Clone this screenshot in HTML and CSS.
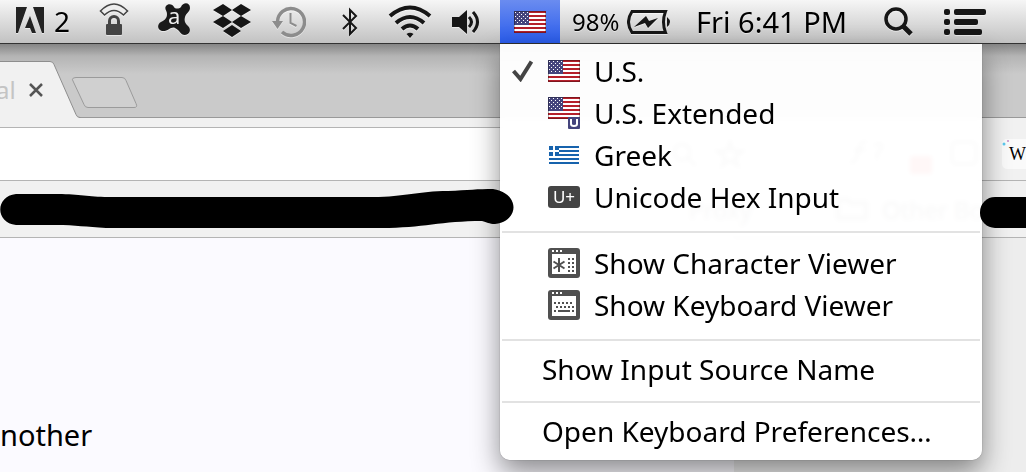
FILE: index.html
```
<!DOCTYPE html>
<html lang="en">
<head>
    <meta charset="utf-8">
    <title>Input Sources</title>
    <link rel="stylesheet" href="styles.css">
</head>
<body>
    <!-- Shared flag drawing -->
    <svg class="defs" aria-hidden="true">
        <defs>
            <pattern id="stars" width="4" height="4" patternUnits="userSpaceOnUse">
                <rect x="1" y="1" width="1" height="1" fill="#fff"/>
                <rect x="3" y="3" width="1" height="1" fill="#fff"/>
            </pattern>
            <symbol id="us-flag" viewBox="0 0 32 22">
                <rect width="32" height="22" fill="#fff"/>
                <path d="M0 1h32M0 5h32M0 9h32M0 13h32M0 17h32M0 21h32" stroke="#b5202b" stroke-width="2"/>
                <rect width="15" height="14" fill="#45457d"/>
                <rect x="1" y="1" width="13" height="12" fill="url(#stars)"/>
                <rect x=".5" y=".5" width="31" height="21" fill="none" stroke="#000" stroke-opacity=".3"/>
            </symbol>
        </defs>
    </svg>

    <header class="menubar">
        <button class="status adobe" aria-label="Adobe notifications">
            <svg width="28" height="26" viewBox="0 0 28 26"><path fill="#222" d="M0 0h11L2 26H0zM17 0h11v26h-2zM14 9l6 17h-4l-2-5h-5z"/></svg>
            <span>2</span>
        </button>
        <button class="status vpn" aria-label="VPN">
            <svg width="30" height="34" viewBox="0 0 30 34">
                <path d="M1.500 8q13.500-14 27 0l-4 4q-9.500-9-19 0z" fill="#eee" stroke="#444" stroke-width="1.600"/>
                <path d="M10.500 22v-4a4.500 4.500 0 0 1 9 0v4" fill="none" stroke="#444" stroke-width="3"/>
                <rect x="7" y="21" width="16" height="11" rx="1" fill="#444"/>
            </svg>
        </button>
        <button class="status avast" aria-label="Antivirus">
            <svg width="32" height="34" viewBox="0 0 32 34">
                <path fill="#1a1a1a" d="M8 3c2-3 7-2 8 1 1 2 5 2 7 0 2-5 9-5 9 1 0 4-4 5-5 9-1 4 0 6 3 9 4 4 1 9-3 9-5 0-5-5-10-7-4-2-7 4-13 3-5-1-5-7-1-9 4-2 6-4 6-8 0-3-3-5-1-8z"/>
                <text x="10" y="21" class="avast-letter">a</text>
            </svg>
        </button>
        <button class="status dropbox" aria-label="Dropbox">
            <svg width="38" height="33" viewBox="0 0 38 33"><path fill="#161616" d="M10 0l9 6-9 6-10-6zM28 0l10 6-10 6-9-6zM10 12l9 6-9 6-10-6zM28 12l10 6-10 6-9-6zM19 21l9 6-9 6-9-6z"/></svg>
        </button>
        <button class="status timemachine" aria-label="Time Machine">
            <svg width="34" height="32" viewBox="0 0 34 32" fill="none" stroke="#8c8c8c">
                <path d="M5.500 16A13.500 13.500 0 1 1 10 26" stroke-width="3.500"/>
                <path d="M0 15h11l-5.500 8z" fill="#8c8c8c" stroke="none"/>
                <path d="M18.500 7v10l6 3" stroke-width="2"/>
            </svg>
        </button>
        <button class="status bluetooth" aria-label="Bluetooth">
            <svg width="16" height="30" viewBox="0 0 16 30" fill="none" stroke="#161616" stroke-width="2"><path d="M1 8l13 13-6 6V3l6 6L1 22"/></svg>
        </button>
        <button class="status wifi" aria-label="Wi-Fi">
            <svg width="44" height="34" viewBox="0 0 44 34" fill="none" stroke="#161616" stroke-width="4">
                <path d="M2 11Q22-6 42 11M8 18q14-12 28 0M14 24q8-7 16 0"/>
                <path d="M18.500 29q3.500-2.500 7 0L22 33z" fill="#161616" stroke="none"/>
            </svg>
        </button>
        <button class="status volume" aria-label="Volume">
            <svg width="30" height="26" viewBox="0 0 30 26" fill="none" stroke="#161616" stroke-width="3">
                <path d="M0 8h7l8-7v24l-8-7H0z" fill="#161616" stroke="none"/>
                <path d="M17 8q5 5 0 10M21 3q9 10 0 20"/>
            </svg>
        </button>

        <div class="input-source">
            <button class="source-button" aria-label="Input source" aria-expanded="true">
                <svg width="32" height="22"><use href="#us-flag"/></svg>
            </button>
            <ul class="menu">
                <li><button class="item">
                    <svg class="check" width="21" height="22" viewBox="0 0 21 22"><path d="M1.500 11l7 8L19.500 1.500" fill="none" stroke="#444" stroke-width="4"/></svg>
                    <svg class="icon" width="32" height="22"><use href="#us-flag"/></svg>
                    U.S.
                </button></li>
                <li><button class="item">
                    <svg class="icon" width="32" height="32" viewBox="0 0 32 32">
                        <use href="#us-flag" width="32" height="22"/>
                        <rect x="20" y="20" width="12" height="12" rx="1" fill="#45457d"/>
                        <path d="M23 22v5q0 2 3 2t3-2v-5" fill="none" stroke="#fff" stroke-width="2"/>
                    </svg>
                    U.S. Extended
                </button></li>
                <li><button class="item">
                    <svg class="icon" width="32" height="20" viewBox="0 0 32 20">
                        <rect x="1" y="1" width="30" height="18" fill="#fff"/>
                        <path d="M1 2h30M1 6h30M1 10h30M1 14h30M1 18h30" stroke="#1763ad" stroke-width="2"/>
                        <rect x="1" y="1" width="10" height="10" fill="#1763ad"/>
                        <path d="M6 1v10M1 6h10" stroke="#fff" stroke-width="2"/>
                    </svg>
                    Greek
                </button></li>
                <li><button class="item">
                    <span class="icon unicode">U+</span>
                    Unicode Hex Input
                </button></li>
                <li class="separator"></li>
                <li><button class="item">
                    <svg class="icon" width="32" height="30" viewBox="0 0 32 30">
                        <rect width="32" height="30" rx="3" fill="#505050"/>
                        <path d="M4 3h2M8 3h2M12 3h2" stroke="#fff" stroke-width="2"/>
                        <rect x="4" y="6" width="24" height="20" fill="#fff"/>
                        <path d="M11 10v14M5.500 13.500l11 7M5.500 20.500l11-7" stroke="#505050" stroke-width="2"/>
                        <path d="M21 10v14M25 10v14" stroke="#505050" stroke-width="2" stroke-dasharray="2 2"/>
                    </svg>
                    Show Character Viewer
                </button></li>
                <li><button class="item">
                    <svg class="icon" width="32" height="30" viewBox="0 0 32 30">
                        <rect width="32" height="30" rx="3" fill="#505050"/>
                        <path d="M4 3h2M8 3h2M12 3h2" stroke="#fff" stroke-width="2"/>
                        <rect x="4" y="6" width="24" height="20" fill="#fff"/>
                        <path d="M6 13h20M8 17h18" stroke="#505050" stroke-width="2" stroke-dasharray="2 2"/>
                        <path d="M6 21h2M10 21h12M24 21h2" stroke="#505050" stroke-width="2"/>
                    </svg>
                    Show Keyboard Viewer
                </button></li>
                <li class="separator"></li>
                <li><button class="item plain">Show Input Source Name</button></li>
                <li class="separator"></li>
                <li><button class="item plain">Open Keyboard Preferences…</button></li>
            </ul>
        </div>

        <button class="status battery" aria-label="Battery 98%">
            <span>98%</span>
            <svg width="44" height="26" viewBox="0 0 44 26">
                <path d="M5 2.500h33.500q-4 10.500 0 21H5q-7-10.500 0-21z" fill="none" stroke="#161616" stroke-width="3"/>
                <path d="M40 8q6 5 0 10z" fill="#161616"/>
                <path d="M7 18l12-11 3 5 9-3-10 10-3-5z" fill="#161616"/>
            </svg>
        </button>
        <button class="status clock">Fri 6:41 PM</button>
        <button class="status search" aria-label="Spotlight">
            <svg width="30" height="30" viewBox="0 0 30 30" fill="none" stroke="#161616"><circle cx="12" cy="12" r="10" stroke-width="3.500"/><path d="M19 19l8 8" stroke-width="5"/></svg>
        </button>
        <button class="status list" aria-label="Notification Center">
            <svg width="42" height="26" viewBox="0 0 42 26" fill="#161616">
                <rect width="6" height="6" rx="2"/><rect x="10" width="32" height="6" rx="2"/>
                <rect y="10" width="6" height="6" rx="2"/><rect x="10" y="10" width="24" height="6" rx="2"/>
                <rect y="20" width="6" height="6" rx="2"/><rect x="10" y="20" width="28" height="6" rx="2"/>
            </svg>
        </button>
    </header>

    <main class="browser">
        <div class="tabstrip">
            <svg class="tab-shape" width="140" height="57" viewBox="0 0 140 57">
                <path d="M-2 .5h52q3 0 4 3l22 50q1 3 4 3V58H-2z" fill="#f1f1f1" stroke="#8e8e8e"/>
                <path d="M76 16.500h46q3 0 4 3l10 23q2 4-2 4H88q-3 0-4-3L73 20q-2-3 3-3.500z" fill="#d0d0d0" stroke="#9b9b9b"/>
            </svg>
            <div class="tab">
                <span class="tab-title">al</span>
                <button class="close" aria-label="Close tab">
                    <svg width="16" height="16" viewBox="0 0 16 16"><path d="M2 2l12 12M14 2L2 14" stroke="#555" stroke-width="2.500"/></svg>
                </button>
            </div>
        </div>
        <div class="toolbar">
            <div class="omnibox">
                <svg width="310" height="40" viewBox="0 0 310 40" fill="none" stroke="#888" stroke-width="3">
                    <circle cx="12" cy="18" r="8"/><path d="M18 24l8 8"/>
                    <path d="M60 8l3 9h10l-8 6 3 9-8-6-8 6 3-9-8-6h10z"/>
                    <path d="M180 28q6 2 8-10t9-10M184 16h12M204 12q8-6 8 2l-5 6v6"/>
                    <rect x="240" y="22" width="22" height="20" fill="#f33" stroke="none"/>
                    <rect x="282" y="8" width="24" height="22" rx="4"/>
                </svg>
            </div>
            <button class="extension" aria-label="Extension">
                <svg width="7" height="8" viewBox="0 0 7 8"><circle cx="2" cy="5" r="1.500" fill="#5bc8ee"/><circle cx="6" cy="2" r="1" fill="#c58ac8"/></svg>
                <span>W</span>
            </button>
        </div>
        <div class="bookmarks">
            <span>Proxy</span>
            <svg width="32" height="22" viewBox="0 0 32 22"><path d="M2 2h10l3 3h15v15H2z" fill="none" stroke="#777" stroke-width="3"/></svg>
            <span>Other Bo</span>
        </div>
        <div class="page">
            <p class="text">nother</p>
            <div class="side"></div>
        </div>
    </main>

    <!-- Redaction strokes -->
    <svg class="redact left" width="514" height="40" viewBox="0 0 514 40"><path d="M16 4h42c22 0 30 3 50 3h265c32 0 45-6 75-6 20-1 30-2 45-2 27 4 27 32 2 35-6 0-8-2-13-3-40 0-60 7-100 7H106c-20-1-30-3-50-3H16c-21-2-21-29 0-31z"/></svg>
    <svg class="redact right" width="46" height="32" viewBox="0 0 46 32"><rect width="70" height="31" rx="15"/></svg>
</body>
</html>
```
FILE: styles.css
```
* {
    box-sizing: border-box;
}

body {
    margin: 0;
    height: 100vh;
    display: flex;
    flex-direction: column;
    overflow: hidden;
    position: relative;
    font-family: "Noto Sans", "Open Sans", sans-serif;
    font-size: 28px;
    color: #000;
}

button {
    font: inherit;
    color: inherit;
    background: none;
    border: none;
    padding: 0;
    text-align: left;
}

svg {
    display: block;
    flex: none;
}

.defs {
    position: absolute;
    width: 0;
    height: 0;
}

/* Menu bar */
.menubar {
    display: flex;
    align-items: center;
    justify-content: flex-end;
    height: 44px;
    flex: none;
    padding-right: 40px;
    background: linear-gradient(#f6f6f6, #c2c2c2);
    border-bottom: 1px solid #333;
    position: relative;
    z-index: 2;
}

.status {
    display: flex;
    align-items: center;
    flex: none;
    line-height: 43px;
    white-space: nowrap;
    filter: drop-shadow(0 1px 0 rgba(255, 255, 255, 0.5));
}

.adobe {
    width: 83px;
    gap: 10px;
}

.adobe svg {
    margin-bottom: 4px;
}

.vpn {
    width: 59px;
}

.avast {
    width: 55px;
}

.avast-letter {
    font-size: 22px;
    fill: #eee;
}

.dropbox {
    width: 59px;
}

.vpn svg,
.avast svg,
.dropbox svg {
    margin-bottom: 3px;
}

.timemachine {
    width: 70px;
}

.bluetooth {
    width: 46px;
}

.wifi {
    width: 64px;
}

.volume {
    width: 48px;
}

.battery {
    width: 124px;
    padding-left: 12px;
    gap: 8px;
    font-size: 24px;
}

.battery,
.clock {
    margin-right: 12px;
}

.clock {
    width: 176px;
    font-size: 29px;
}

.search {
    width: 60px;
}

/* Input source menu */
.input-source {
    position: relative;
    flex: none;
}

.source-button {
    display: flex;
    align-items: center;
    justify-content: center;
    width: 60px;
    height: 43px;
    background: linear-gradient(#6a8cf0, #2a5cec);
}

.menu {
    position: absolute;
    top: 44px;
    left: 0;
    width: 482px;
    margin: 0;
    padding: 6px 0 10px;
    list-style: none;
    background: rgba(255, 255, 255, 0.96);
    backdrop-filter: blur(2px);
    border-radius: 0 0 10px 10px;
    box-shadow: 0 0 1px rgba(0, 0, 0, 0.6), 0 12px 28px rgba(0, 0, 0, 0.45);
}

.item {
    display: flex;
    align-items: center;
    width: 100%;
    height: 42px;
    padding-left: 48px;
    white-space: nowrap;
}

.plain {
    height: 38px;
    padding-left: 42px;
}

.icon {
    margin-right: 14px;
}

.check {
    margin-left: -36px;
    margin-right: 15px;
}

.unicode {
    width: 32px;
    height: 22px;
    border-radius: 3px;
    background: #444;
    color: #fff;
    font-size: 17px;
    line-height: 22px;
    text-align: center;
}

.separator {
    height: 2px;
    margin: 13px 2px 9px;
    background: #e2e2e2;
}

/* Browser window behind the menu */
.browser {
    flex: 1;
    display: flex;
    flex-direction: column;
    background: #f1f1f1;
}

.tabstrip {
    position: relative;
    height: 74px;
    flex: none;
    padding-top: 17px;
    background: linear-gradient(#858585, #b4b4b4 12px, #cacaca 30px);
    border-bottom: 1px solid #999;
}

.tab-shape {
    position: absolute;
    left: 0;
    bottom: -1px;
}

.tab {
    position: relative;
    display: flex;
    align-items: center;
    justify-content: space-between;
    width: 44px;
    height: 57px;
}

.tab-title {
    margin-left: -4px;
    font-size: 24px;
    color: #c4c4c4;
}

.toolbar {
    display: flex;
    height: 63px;
    flex: none;
    padding: 9px 0 0;
    border-bottom: 1px solid #b4b4b4;
}

.omnibox {
    flex: 1;
    display: flex;
    justify-content: flex-end;
    align-items: center;
    margin-right: 46px;
    background: #fff;
    border-top: 1px solid #b4b4b4;
}

.extension {
    display: flex;
    width: 24px;
    height: 30px;
    margin: 12px 0 0 -24px;
    border-radius: 5px 0 0 5px;
    background: #fafafa;
    font-family: "Liberation Serif", serif;
    font-size: 18px;
    line-height: 30px;
}

.bookmarks {
    display: flex;
    align-items: center;
    justify-content: flex-end;
    gap: 14px;
    height: 57px;
    flex: none;
    padding-right: 42px;
    border-bottom: 1px solid #b4b4b4;
    font-size: 24px;
    color: #555;
}

.bookmarks span:first-child {
    margin-right: 70px;
}

.page {
    flex: 1;
    display: flex;
    justify-content: space-between;
    background: #fbfaff;
}

.text {
    margin: 177px 0 0;
    font-size: 29px;
    line-height: 40px;
}

.side {
    width: 292px;
    background: #ededed;
}

.redact {
    position: absolute;
    z-index: 3;
}

.left {
    top: 190px;
    left: 0;
    overflow: visible;
}

.right {
    top: 197px;
    right: 0;
}
```
